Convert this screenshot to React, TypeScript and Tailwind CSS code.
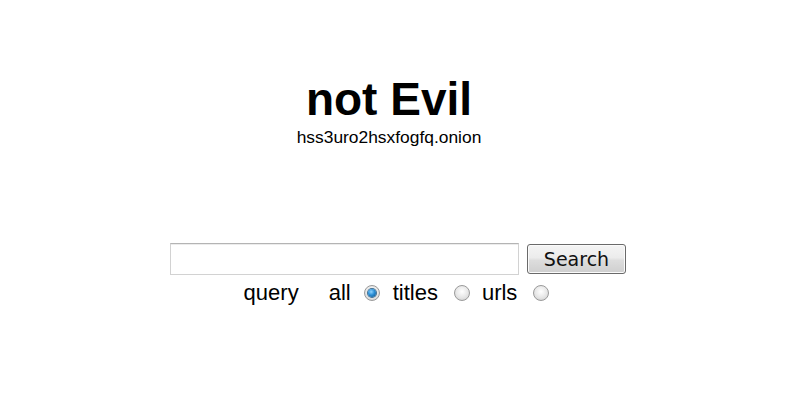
import React from "react";

function Radio({ checked }: { checked?: boolean }) {
  return (
    <span className="relative inline-flex h-[16px] w-[16px] items-center justify-center rounded-full border border-[#9a9a9a] bg-[radial-gradient(circle_at_50%_40%,#ffffff_0%,#e6e6e6_55%,#c9c9c9_100%)]">
      {checked && (
        <span className="h-[8px] w-[8px] rounded-full bg-[radial-gradient(circle_at_40%_35%,#8fd3ff_0%,#2b8fd6_45%,#0d4f86_100%)] shadow-[0_0_0_1px_#3d6f94]" />
      )}
    </span>
  );
}

export default function App() {
  return (
    <div className="h-[408px] w-[800px] bg-white text-black" style={{ fontFamily: '"Liberation Sans", Arial, sans-serif' }}>
      <div className="flex flex-col items-center pt-[75px]">
        <div className="flex flex-col items-center pr-[22px]">
          <h1 className="text-[46px] font-bold leading-[48px]">not Evil</h1>
          <div className="mt-[4px] text-[17.4px] leading-[20px]">hss3uro2hsxfogfq.onion</div>
        </div>
        <div className="mt-[96px] flex h-[32px] items-center pr-[4px]">
          <div className="h-[32px] w-[349px] border border-[#d2d2d2] border-t-[#b4b4b4] bg-white shadow-[inset_0_1px_0_#ececec]" />
          <button
            className="ml-[8px] flex h-[30px] w-[99px] items-center justify-center rounded-[3px] border border-[#6a6a6a] bg-[linear-gradient(to_bottom,#f4f4f4_0%,#ececec_45%,#dddddd_55%,#cfcfcf_100%)] text-[19px] text-[#111] shadow-[inset_0_0_0_1px_#fbfbfb]"
            style={{ fontFamily: '"DejaVu Sans", Verdana, sans-serif' }}
          >
            Search
          </button>
        </div>
        <div className="mt-[6px] flex h-[24px] items-center pr-[7px] text-[22px] leading-[24px] text-black">
          <span>query</span>
          <span className="ml-[30px]">all</span>
          <span className="ml-[13px] mr-[13px] flex items-center"><Radio checked /></span>
          <span>titles</span>
          <span className="ml-[16px] mr-[12px] flex items-center"><Radio /></span>
          <span>urls</span>
          <span className="ml-[16px] flex items-center"><Radio /></span>
        </div>
      </div>
    </div>
  );
}
